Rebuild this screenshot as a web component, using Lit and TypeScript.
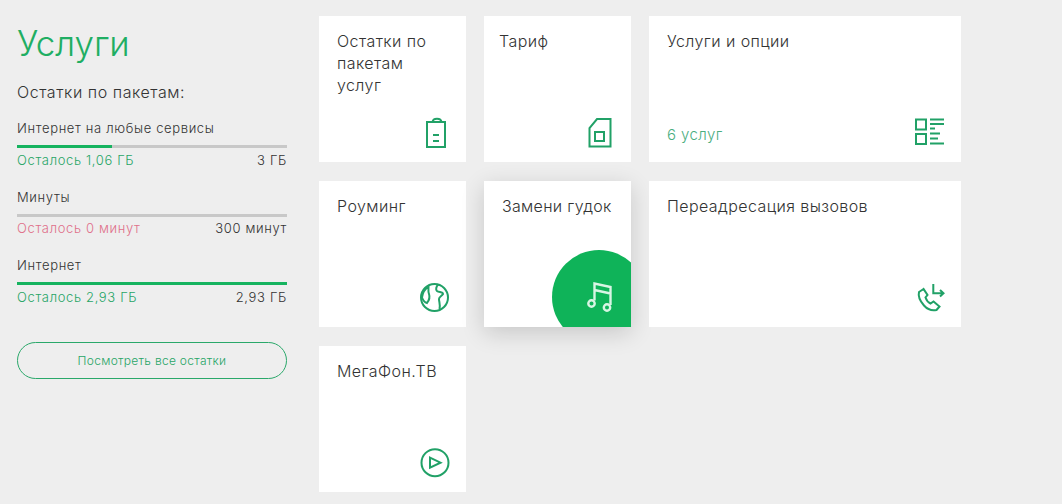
import { LitElement, html, css, svg } from 'lit';
import { customElement } from 'lit/decorators.js';

const icons = {
    battery: svg`<path d="M8 5h5.500c.5-4.500 8.500-4.500 9 0H26v25H8zM13.500 5h9M14 18h6M14 24h6"/>`,
    sim: svg`<path d="M13 2h13.500v27.500H5.500V11zM11 15h9v9h-9z"/>`,
    list: svg`<path d="M2 2.500h10v10H2zM2 17h10v10H2zM16 2.500h14M16 7h14M16 11.500h5M16 16.500h10M16 21.500h8M16 26.500h14"/>`,
    globe: svg`<circle cx="15.500" cy="15.500" r="13.500"/><path d="M9.500 4.500C6 7 3.500 11 3 15.500c1 3 3 5 5 5.500 2-2.500 3-6 2-9-1-2-.5-5-.5-7.500zM19.500 2.500c-2.500 2-3 5-1.500 6.500 2 1.500 6 .5 6 3-1 2-4 2.500-4 5 0 3 1.500 5 .5 10"/>`,
    music: svg`<path d="M10.500 18.500V1.500L26.500 5v18M10.500 8l16 3.500"/><circle cx="7.500" cy="21.500" r="3.200"/><circle cx="23" cy="25.500" r="3.200"/>`,
    call: svg`<path d="M19.300 2v9.300h10M26 8l3.500 3.300-3.500 3.300M9.500 7l-4.500 3c-1 4 1 9 5 13.500s8 5.500 12.500 4.500l3-3.500-6-5-3 2c-2-1-4-3-5-6l2-2.500z"/>`,
    play: svg`<circle cx="16" cy="15.700" r="13.500"/><path d="M11 10.700l10.500 5-10.500 5z"/>`,
};

type Card = { title: string; icon: keyof typeof icons; note?: string; mod?: string };

const cards: Card[] = [
    { title: 'Остатки по пакетам услуг', icon: 'battery' },
    { title: 'Тариф', icon: 'sim', mod: 'tight' },
    { title: 'Услуги и опции', icon: 'list', note: '6 услуг' },
    { title: 'Роуминг', icon: 'globe' },
    { title: 'Замени гудок', icon: 'music', mod: 'active' },
    { title: 'Переадресация вызовов', icon: 'call' },
    { title: 'МегаФон.ТВ', icon: 'play' },
];

const packets = [
    { name: 'Интернет на любые сервисы', left: 'Осталось 1,06 ГБ', total: '3 ГБ', pct: 35, empty: false },
    { name: 'Минуты', left: 'Осталось 0 минут', total: '300 минут', pct: 0, empty: true },
    { name: 'Интернет', left: 'Осталось 2,93 ГБ', total: '2,93 ГБ', pct: 100, empty: false },
];

@customElement('app-root')
export class AppRoot extends LitElement {
    static styles = css`
        :host {
            display: block;
            height: 504px;
            overflow: hidden;
            background: #eeeeee;
            color: #333333;
            font-family: Inter, "Liberation Sans", sans-serif;
            font-weight: 300;
        }
        .page {
            display: flex;
            padding: 16px 0 0 17px;
        }
        .side {
            width: 270px;
            margin-right: 32px;
            flex: none;
        }
        h1 {
            margin: 5px 0 0;
            font-size: 35px;
            line-height: 44px;
            font-weight: 300;
            letter-spacing: 0;
            color: #1fae63;
        }
        .subtitle {
            margin-top: 17px;
            font-size: 16px;
            line-height: 20px;
            letter-spacing: 0.55px;
        }
        .packet {
            margin-top: 17px;
        }
        .packet + .packet {
            margin-top: 19px;
        }
        .name {
            font-size: 13px;
            line-height: 18px;
            letter-spacing: 0.65px;
        }
        .track {
            height: 3px;
            margin-top: 8px;
            background: #c8c8c8;
        }
        .fill {
            height: 100%;
            background: #16b35f;
        }
        .row {
            display: flex;
            justify-content: space-between;
            margin-top: 2.5px;
            font-size: 13px;
            line-height: 18px;
            letter-spacing: 0.65px;
        }
        .left { color: #27a566; }
        .left.empty { color: #e0708a; }
        .all {
            display: flex;
            align-items: center;
            justify-content: center;
            height: 37px;
            margin-top: 36.500px;
            box-sizing: border-box;
            border: 1px solid #2aa86a;
            border-radius: 19px;
            font-size: 12px;
            letter-spacing: 0.3px;
            color: #27a566;
        }
        .grid {
            display: grid;
            grid-template-columns: 147px 147px 312px;
            grid-auto-rows: 146px;
            gap: 19px 18px;
        }
        .card {
            position: relative;
            overflow: hidden;
            box-sizing: border-box;
            padding: 14px 18px;
            background: #ffffff;
            font-size: 16px;
            line-height: 22px;
            letter-spacing: 0.42px;
        }
        .card.tight { padding-left: 15px; }
        .card.active {
            padding: 14px 15px 14px 18px;
            white-space: nowrap;
            overflow: visible;
            letter-spacing: 0.3px;
            box-shadow: 0 6px 22px rgba(0, 0, 0, 0.16);
        }
        .note {
            position: absolute;
            left: 18px;
            bottom: 17px;
            font-size: 15px;
            line-height: 20px;
            color: #4aae80;
        }
        .icon {
            position: absolute;
            right: 15px;
            bottom: 13px;
            width: 32px;
            height: 32px;
            fill: none;
            stroke: #21a167;
            stroke-width: 2;
        }
        .blob {
            position: absolute;
            inset: 0;
            overflow: hidden;
        }
        .blob::before {
            content: "";
            position: absolute;
            left: 68px;
            top: 69px;
            width: 94px;
            height: 94px;
            border-radius: 50%;
            background: #0fb359;
        }
        .active .icon {
            stroke: #d8f5e4;
            stroke-width: 2.4;
        }
        .active .title {
            position: relative;
        }
    `;

    render() {
        return html`
            <div class="page">
                <section class="side">
                    <h1>Услуги</h1>
                    <div class="subtitle">Остатки по пакетам:</div>
                    ${packets.map(p => html`
                        <div class="packet">
                            <div class="name">${p.name}</div>
                            <div class="track"><div class="fill" style="width: ${p.pct}%"></div></div>
                            <div class="row">
                                <span class="left ${p.empty ? 'empty' : ''}">${p.left}</span>
                                <span>${p.total}</span>
                            </div>
                        </div>
                    `)}
                    <div class="all">Посмотреть все остатки</div>
                </section>
                <section class="grid">
                    ${cards.map(c => html`
                        <div class="card ${c.mod ?? ''}">
                            ${c.mod === 'active' ? html`<div class="blob"></div>` : ''}
                            <div class="title">${c.title}</div>
                            ${c.note ? html`<div class="note">${c.note}</div>` : ''}
                            <svg class="icon" viewBox="0 0 32 32">${icons[c.icon]}</svg>
                        </div>
                    `)}
                </section>
            </div>
        `;
    }
}
